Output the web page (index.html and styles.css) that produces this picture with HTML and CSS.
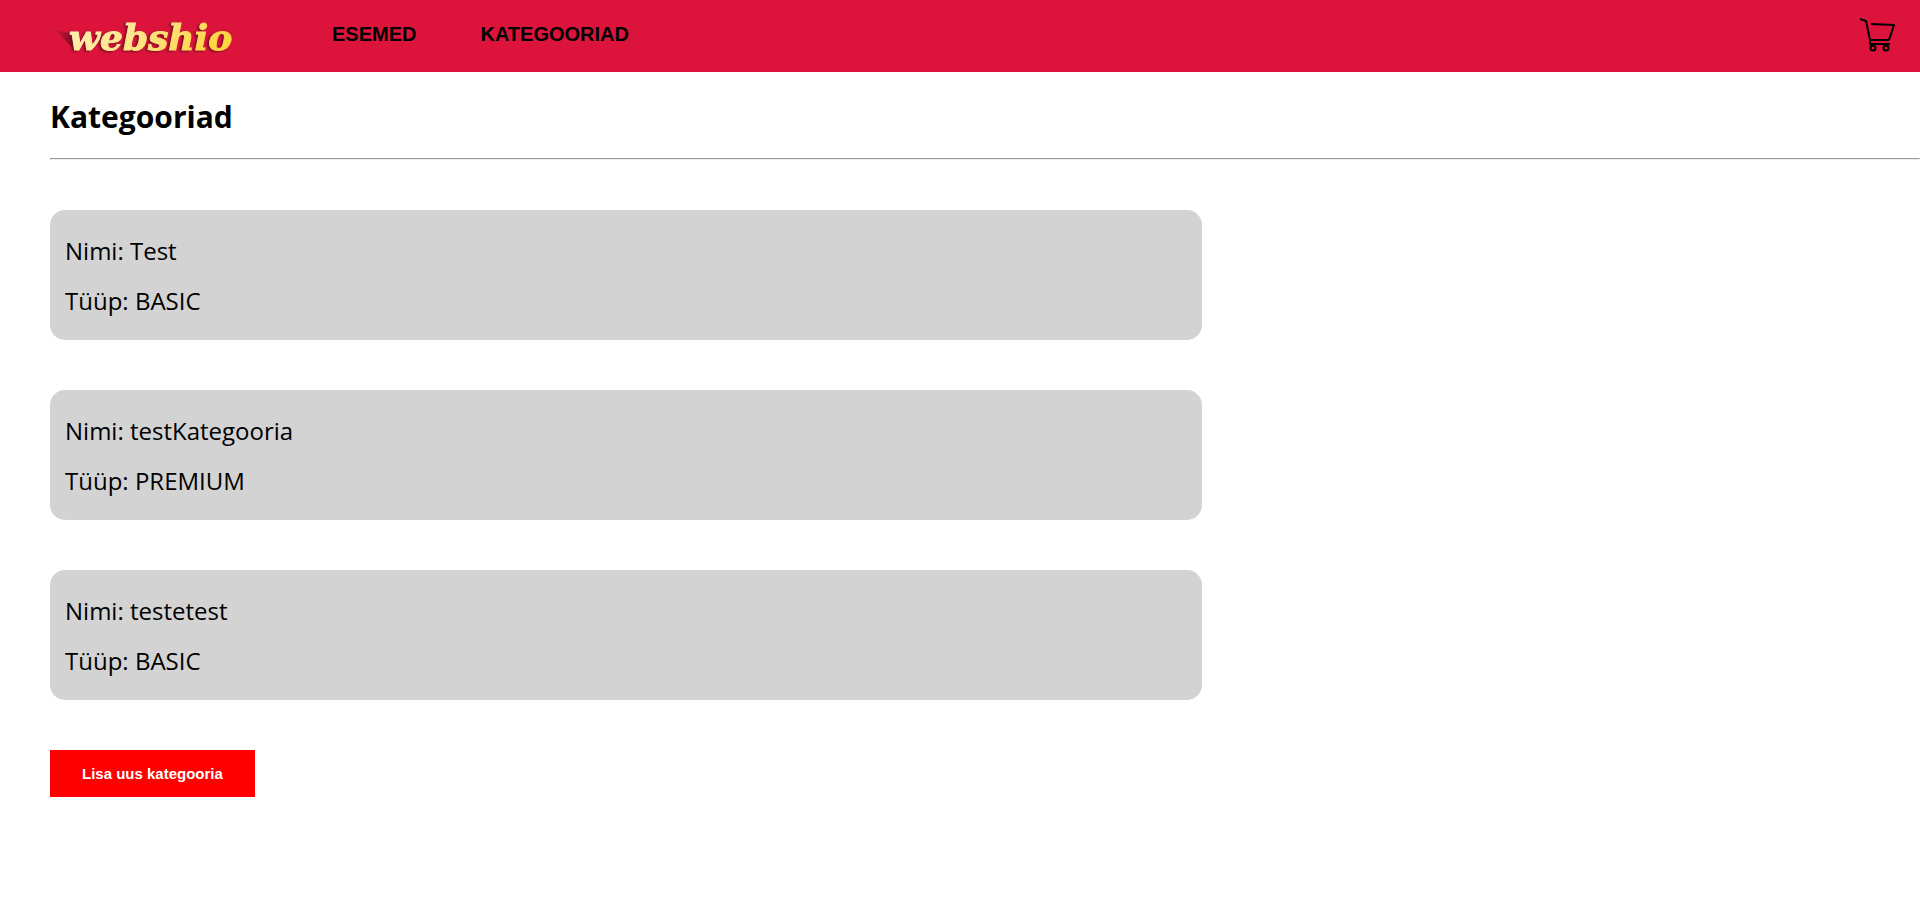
FILE: index.html
```
<!DOCTYPE html>
<html lang="et">
<head>
<meta charset="utf-8">
<meta name="viewport" content="width=device-width, initial-scale=1">
<title>Webshio – Kategooriad</title>
<link rel="stylesheet" href="styles.css">
</head>
<body>
<header class="header">
  <a class="logo" href="#">
    <svg width="220" height="72" viewBox="0 0 220 72" role="img" aria-label="webshio">
      <defs>
        <linearGradient id="gold" x1="0" y1="0" x2="1" y2="0.25">
          <stop offset="0" stop-color="#fff0b8"/>
          <stop offset="0.5" stop-color="#ffe48a"/>
          <stop offset="1" stop-color="#ffd544"/>
        </linearGradient>
        <linearGradient id="shade" x1="0" y1="0" x2="1" y2="0.8">
          <stop offset="0" stop-color="#6e0a1e" stop-opacity="0"/>
          <stop offset="1" stop-color="#6e0a1e"/>
        </linearGradient>
      </defs>
      <path d="M14 29l18 5 3 15-3-2z" fill="url(#shade)"/>
      <text class="logo-text" x="29" y="50" fill="url(#gold)" stroke="url(#gold)">webshio</text>
    </svg>
  </a>
  <nav class="nav">
    <a href="#">ESEMED</a>
    <a href="#">KATEGOORIAD</a>
  </nav>
  <a class="cart" href="#" aria-label="Ostukorv">
    <svg width="36" height="34" viewBox="0 0 36 34" fill="none" stroke="#000" stroke-width="2">
      <path d="M0 1l6 2 4 19v4M11 6l23 1-5 15M9 22h20M9 26h21" stroke-linejoin="round"/>
      <circle cx="13" cy="30" r="2.5"/>
      <circle cx="26" cy="30" r="2.5"/>
    </svg>
  </a>
</header>
<main class="content">
  <h1 class="title">Kategooriad</h1>
  <hr class="rule">
  <section class="cards">
    <article class="card">
      <p>Nimi: Test</p>
      <p>Tüüp: BASIC</p>
    </article>
    <article class="card">
      <p>Nimi: testKategooria</p>
      <p>Tüüp: PREMIUM</p>
    </article>
    <article class="card">
      <p>Nimi: testetest</p>
      <p>Tüüp: BASIC</p>
    </article>
  </section>
  <button class="add" type="button">Lisa uus kategooria</button>
</main>
</body>
</html>
```
FILE: styles.css
```
body {
  margin: 0;
  background: #fff;
  color: #000;
  font-family: "Segoe UI", "Open Sans", sans-serif;
}

.header {
  display: flex;
  height: 72px;
  padding: 0 24px 0 40px;
  background: #dc143c;
}

.logo,
.logo svg {
  display: block;
}

.logo-text {
  font: italic bold 36px "DejaVu Serif", serif;
  filter: drop-shadow(-2px 1px 1px #7c0b22);
}

.nav {
  display: flex;
  gap: 64px;
  margin-left: 72px;
  padding-top: 22px;
  font: bold 20px/24px "Liberation Sans", Arial, sans-serif;
}

.nav a {
  color: #000;
  text-decoration: none;
}

.cart {
  margin: 18px 0 0 auto;
}

.cart svg {
  display: block;
}

.content {
  padding-left: 50px;
}

.title {
  margin: 0;
  padding: 24px 0 20px;
  font-size: 30px;
  line-height: 42px;
}

.rule {
  margin: 0;
  border: 1px solid;
  border-color: #9a9a9a #eee #eee #9a9a9a;
}

.cards {
  display: flex;
  flex-direction: column;
  gap: 50px;
  width: 60vw;
  padding: 50px 0;
}

.card {
  display: flex;
  flex-direction: column;
  gap: 16px;
  padding: 24px 15px 22px;
  border-radius: 15px;
  background: #d3d3d3;
}

.card p {
  margin: 0;
  font-size: 24px;
  line-height: 34px;
}

.add {
  display: block;
  padding: 15px 32px;
  border: 0;
  background: #f00;
  color: #fff;
  font: bold 15px/17px "Liberation Sans", Arial, sans-serif;
}
```
